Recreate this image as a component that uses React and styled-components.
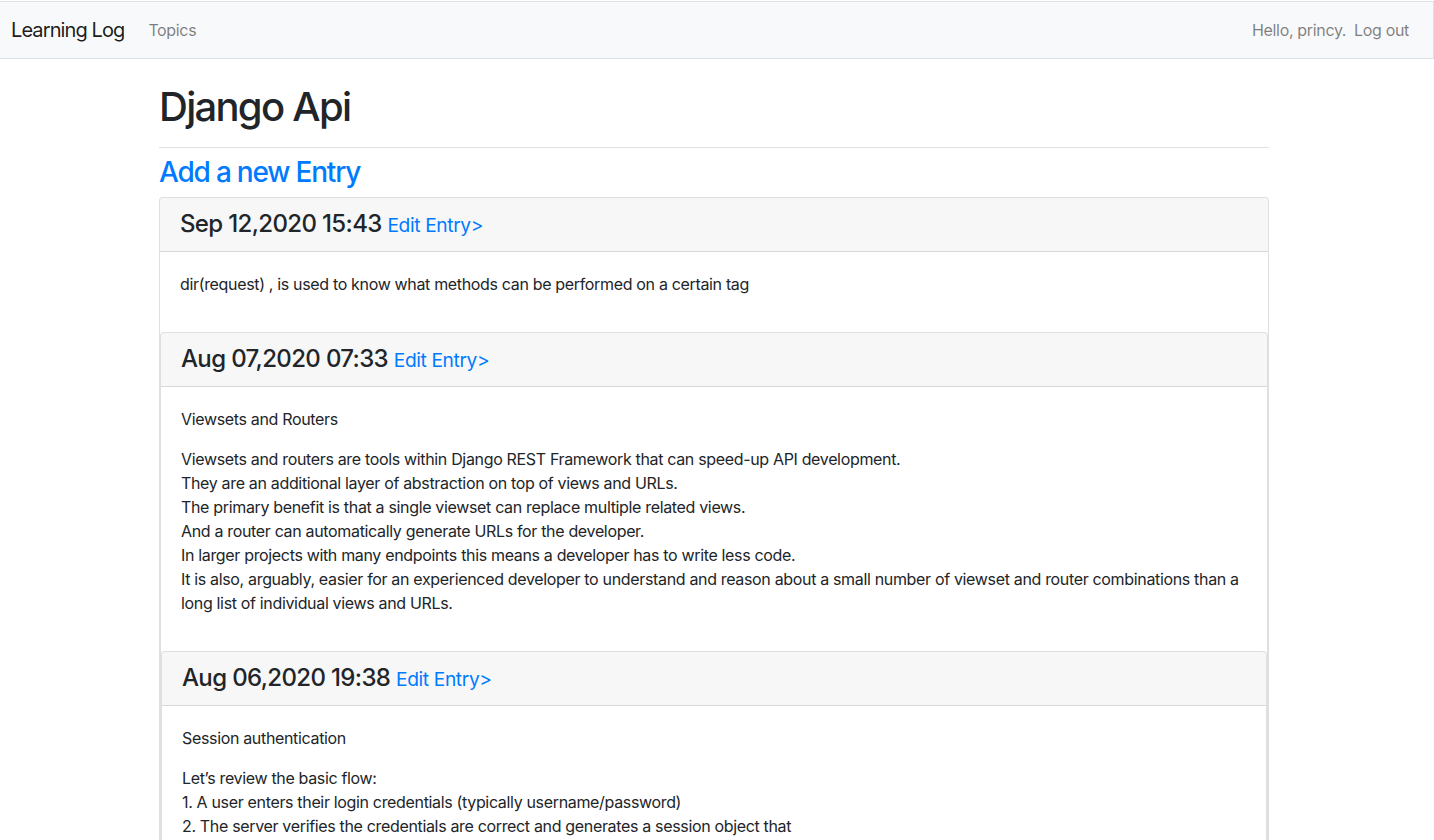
import React from 'react'
import styled, { createGlobalStyle } from 'styled-components'

const GlobalStyle = createGlobalStyle`
  html, body {
    margin: 0;
    padding: 0;
    background: #fff;
  }
  body {
    font-family: Inter, "Noto Sans", "Liberation Sans", sans-serif;
    font-size: 16px;
    line-height: 1.5;
    letter-spacing: -0.021em;
    color: #212529;
  }
  * { box-sizing: border-box; }
`

const Page = styled.div`
  padding-top: 1px;
`

const Navbar = styled.nav`
  display: flex;
  align-items: center;
  justify-content: space-between;
  background: #f8f9fa;
  border: 1px solid #dee2e6;
  border-left: none;
  padding: 8px 16px 8px 11px;
  margin-bottom: 24px;
`

const NavLeft = styled.div`
  display: flex;
  align-items: center;
`

const Brand = styled.a`
  font-size: 20px;
  line-height: 30px;
  letter-spacing: -0.045em;
  padding: 5px 0;
  margin-right: 16px;
  color: rgba(0, 0, 0, 0.9);
  text-decoration: none;
`

const NavLink = styled.a`
  padding: 8px;
  color: rgba(0, 0, 0, 0.5);
  text-decoration: none;
`

const NavText = styled.span`
  color: rgba(0, 0, 0, 0.5);
  padding: 8px 0;
`

const NavRight = styled.div`
  display: flex;
  align-items: center;
`

const Main = styled.main`
  width: 1110px;
  margin-left: calc(50% - 558px);
`

const PageHeader = styled.div`
  padding-bottom: 8px;
  margin-bottom: 8px;
  border-bottom: 1px solid #dee2e6;
`

const Title = styled.h1`
  font-size: 40px;
  font-weight: 500;
  line-height: 48px;
  letter-spacing: -0.043em;
  margin: 0 0 8px;
`

const AddEntry = styled.h3`
  font-size: 28px;
  font-weight: 500;
  line-height: 33px;
  letter-spacing: -0.043em;
  margin: 0 0 8px;

  a {
    color: #007bff;
    text-decoration: none;
  }
`

const Card = styled.div`
  display: flex;
  flex-direction: column;
  background: #fff;
  border: 1px solid rgba(0, 0, 0, 0.125);
  border-radius: 4px;
`

const CardHeader = styled.h4`
  margin: 0;
  padding: 12px 20px;
  font-size: 24px;
  font-weight: 500;
  line-height: 28px;
  letter-spacing: -0.027em;
  background: rgba(0, 0, 0, 0.03);
  border-bottom: 1px solid rgba(0, 0, 0, 0.125);
  border-radius: 3px 3px 0 0;

  small {
    font-size: 80%;
    font-weight: 400;
    letter-spacing: -0.02em;
  }
  a {
    color: #007bff;
    text-decoration: none;
  }
`

const CardBody = styled.div`
  padding: 20px;

  p {
    margin: 0 0 16px;
  }
`

const entries = [
  {
    date: 'Sep 12,2020 15:43',
    paras: [['dir(request) , is used to know what methods can be performed on a certain tag']],
  },
  {
    date: 'Aug 07,2020 07:33',
    paras: [
      ['Viewsets and Routers'],
      [
        'Viewsets and routers are tools within Django REST Framework that can speed-up API development.',
        'They are an additional layer of abstraction on top of views and URLs.',
        'The primary benefit is that a single viewset can replace multiple related views.',
        'And a router can automatically generate URLs for the developer.',
        'In larger projects with many endpoints this means a developer has to write less code.',
        'It is also, arguably, easier for an experienced developer to understand and reason about a small number of viewset and router combinations than a long list of individual views and URLs.',
      ],
    ],
  },
  {
    date: 'Aug 06,2020 19:38',
    paras: [
      ['Session authentication'],
      [
        'Let\u2019s review the basic flow:',
        '1. A user enters their login credentials (typically username/password)',
        '2. The server verifies the credentials are correct and generates a session object that',
        'is then stored in the database',
        '3. The server sends the client a session ID\u2014not the session object itself\u2014which is',
        'stored as a cookie on the browser',
        '4. On all future requests the session ID is included as an HTTP header and, if verified',
        'by the database, the request proceeds',
      ],
    ],
  },
]

// entries are nested one inside the other, like the original template output
const renderEntries = (list) => {
  if (!list.length) return null
  const [entry, ...rest] = list
  return (
    <Card>
      <CardHeader>
        {entry.date} <small><a href="#">Edit Entry&gt;</a></small>
      </CardHeader>
      <CardBody>
        {entry.paras.map((lines, i) => (
          <p key={i}>
            {lines.map((line, j) => (
              <React.Fragment key={j}>
                {j > 0 && <br />}
                {line}
              </React.Fragment>
            ))}
          </p>
        ))}
      </CardBody>
      {renderEntries(rest)}
    </Card>
  )
}

export default function App() {
  return (
    <Page>
      <GlobalStyle />
      <Navbar>
        <NavLeft>
          <Brand href="#">Learning Log</Brand>
          <NavLink href="#">Topics</NavLink>
        </NavLeft>
        <NavRight>
          <NavText>Hello, princy.</NavText>
          <NavLink href="#">Log out</NavLink>
        </NavRight>
      </Navbar>
      <Main>
        <PageHeader>
          <Title>Django Api</Title>
        </PageHeader>
        <AddEntry><a href="#">Add a new Entry</a></AddEntry>
        {renderEntries(entries)}
      </Main>
    </Page>
  )
}
